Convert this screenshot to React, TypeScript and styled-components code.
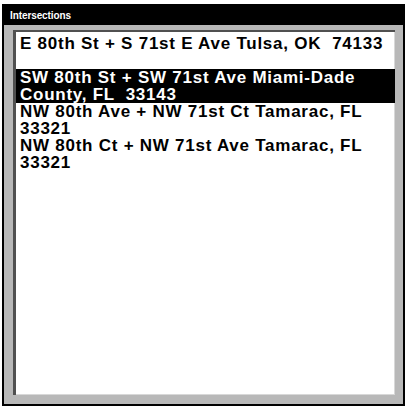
import React from 'react'
import styled, {createGlobalStyle} from 'styled-components'

const GlobalStyle = createGlobalStyle`
  html, body {
    margin: 0;
    padding: 0;
    background: #ffffff;
  }
  body {
    font-family: "Liberation Sans", Arial, sans-serif;
  }
`;

type Item = {
  text: string
  selected?: boolean
}

const items: Item[] = [
  {text: 'E 80th St + S 71st E Ave Tulsa, OK  74133'},
  {text: 'SW 80th St + SW 71st Ave Miami-Dade County, FL  33143', selected: true},
  {text: 'NW 80th Ave + NW 71st Ct Tamarac, FL 33321'},
  {text: 'NW 80th Ct + NW 71st Ave Tamarac, FL 33321'},
]

const App = () => {
  return (
    <Page>
      <GlobalStyle />
      <Panel>
        <TitleBar>Intersections</TitleBar>
        <Body>
          <ListBox>
            {items.map((item) => (
              <Row key={item.text} selected={item.selected}>
                {item.text}
              </Row>
            ))}
          </ListBox>
        </Body>
      </Panel>
    </Page>
  )
}

export default App

const Page = styled.div`
  width: 407px;
  height: 409px;
  padding: 4px 0 0 2px;
  box-sizing: border-box;
  background: #ffffff;
`;

const Panel = styled.div`
  display: flex;
  flex-direction: column;
  width: 403px;
  height: 402px;
  box-sizing: border-box;
  border: 2px solid #000000;
  background: #b8b8b8;
`;

const TitleBar = styled.div`
  height: 19px;
  flex-shrink: 0;
  display: flex;
  align-items: center;
  padding-left: 6px;
  background: #000000;
  color: #ffffff;
  font-family: "Liberation Sans", Arial, sans-serif;
  font-weight: bold;
  font-size: 10px;
  letter-spacing: -0.1px;
`;

const Body = styled.div`
  flex: 1;
  display: flex;
  padding: 5px 8px 9px 9px;
  min-height: 0;
`;

const ListBox = styled.div`
  flex: 1;
  background: #ffffff;
  border-left: 3px solid #505050;
  border-top: 2px solid #505050;
  padding-top: 3px;
  box-shadow: inset -1px -1px 0 #d8d8d8;
`;

const Row = styled.div<{selected?: boolean}>`
  height: 34px;
  padding: 0 0 0 4px;
  background: ${(p) => (p.selected ? '#000000' : 'transparent')};
  color: ${(p) => (p.selected ? '#ffffff' : '#000000')};
  font-family: "Liberation Sans", Arial, sans-serif;
  font-weight: bold;
  font-size: 17px;
  line-height: 17px;
  letter-spacing: 0.75px;
  white-space: pre-wrap;
  overflow: hidden;
`;
